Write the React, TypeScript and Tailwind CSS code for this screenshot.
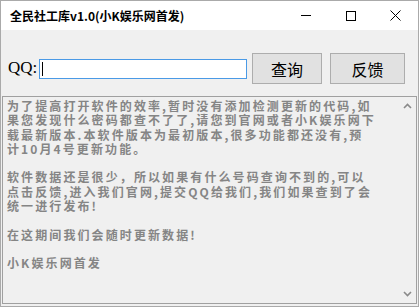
import React from "react";

const lines = [
  "为了提高打开软件的效率,暂时没有添加检测更新的代码,如",
  "果您发现什么密码都查不了了,请您到官网或者小K娱乐网下",
  "载最新版本.本软件版本为最初版本,很多功能都还没有,预",
  "计10月4号更新功能。",
  "",
  "软件数据还是很少，所以如果有什么号码查询不到的,可以",
  "点击反馈,进入我们官网,提交QQ给我们,我们如果查到了会",
  "统一进行发布!",
  "",
  "在这期间我们会随时更新数据!",
  "",
  "小K娱乐网首发",
];

const cjk = { fontFamily: '"Noto Sans CJK SC", "Noto Sans", sans-serif' };

export default function App() {
  return (
    <div className="w-[419px] h-[307px] flex flex-col border border-[#aaaaaa] bg-[#f0f0f0] overflow-hidden">
      {/* title bar */}
      <div className="h-[29px] bg-white flex items-center shrink-0">
        <span className="pl-[9px] text-[12px] font-bold text-black flex-1" style={cjk}>
          全民社工库v1.0(小K娱乐网首发)
        </span>
        <div className="w-[45px] h-full flex items-center justify-center">
          <div className="w-[10px] h-px bg-black" />
        </div>
        <div className="w-[45px] h-full flex items-center justify-center">
          <div className="w-[10px] h-[10px] border border-black" />
        </div>
        <div className="w-[45px] h-full flex items-center justify-center">
          <svg width="11" height="11" viewBox="0 0 11 11">
            <path d="M0.5 0.5L10.5 10.5M10.5 0.5L0.5 10.5" stroke="#000" strokeWidth="1" />
          </svg>
        </div>
      </div>

      {/* query row */}
      <div className="flex items-start pt-[23px] pl-[7px] h-[66px] shrink-0">
        <span
          className="mt-[5px] text-[17px] leading-[20px] text-black w-[31px]"
          style={{ fontFamily: '"Liberation Serif", serif' }}
        >
          QQ:
        </span>
        <div className="mt-[6px] w-[208px] h-[20px] bg-white border border-[#4a9ae6] flex items-center pl-[2px]">
          <div className="w-px h-[14px] bg-black" />
        </div>
        <button className="ml-[5px] w-[70px] h-[31px] bg-[#e1e1e1] border border-[#adadad] text-[16px] text-black" style={cjk}>
          查询
        </button>
        <button className="ml-[8px] w-[75px] h-[31px] bg-[#e1e1e1] border border-[#adadad] text-[16px] text-black" style={cjk}>
          反馈
        </button>
      </div>

      {/* text area */}
      <div className="flex-1 ml-[1px] mr-[1px] mb-[2px] border border-[#a0a0a0] bg-[#f0f0f0] flex min-h-0">
        <div
          className="flex-1 pl-[4px] pt-[2px] text-[12px] leading-[14.3px] tracking-[2.1px] font-bold text-[#858585] whitespace-pre"
          style={cjk}
        >
          {lines.map((l, i) => (
            <div key={i} className="h-[14.3px]">{l}</div>
          ))}
        </div>
        <div className="w-[17px] flex flex-col justify-between items-center py-[6px]">
          <svg width="9" height="6" viewBox="0 0 9 6">
            <path d="M1 5L4.5 1.5L8 5" stroke="#8a8a8a" strokeWidth="1.6" fill="none" />
          </svg>
          <svg width="9" height="6" viewBox="0 0 9 6">
            <path d="M1 1L4.5 4.5L8 1" stroke="#8a8a8a" strokeWidth="1.6" fill="none" />
          </svg>
        </div>
      </div>
    </div>
  );
}
